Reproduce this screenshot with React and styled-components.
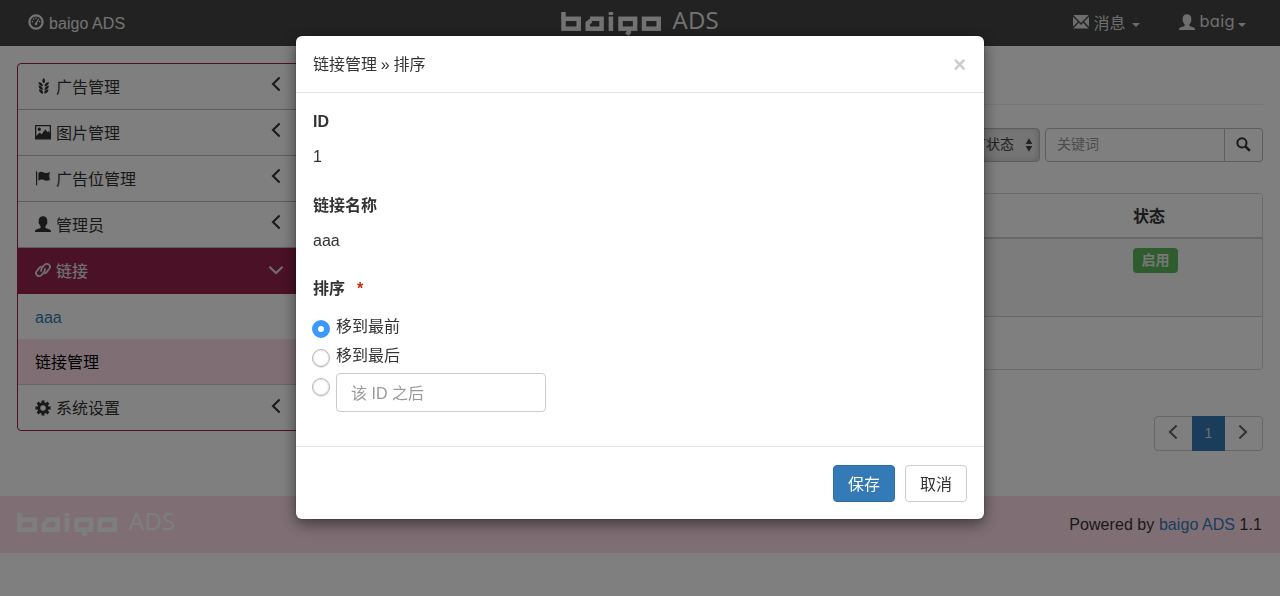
import React from "react";
import styled, { createGlobalStyle, css } from "styled-components";

const Global = createGlobalStyle`
  * { box-sizing: border-box; }
  html, body { margin: 0; height: 596px; overflow: hidden; }
  body {
    background: #fff;
    color: #333;
    font: 16px/23px "Liberation Sans", "Noto Sans CJK SC", sans-serif;
  }
  input, button { font: inherit; color: inherit; margin: 0; }
  svg { display: block; flex: none; }
`;

/* ---------- icons ---------- */
const Icon = ({ size = 16, children }) => (
  <svg width={size} height={size} viewBox="0 0 16 16" fill="currentColor" aria-hidden="true">
    {children}
  </svg>
);
const line = { fill: "none", stroke: "currentColor" };

const DashboardIcon = () => (
  <Icon>
    <circle cx="8" cy="8" r="6.6" {...line} strokeWidth="2.2" />
    <circle cx="4.4" cy="7.6" r=".8" />
    <circle cx="5.7" cy="5.1" r=".8" />
    <circle cx="8" cy="4.1" r=".8" />
    <circle cx="11.6" cy="7.6" r=".8" />
    <path d="M10.2 4.4l1 .5-2.1 4.2a1.3 1.3 0 1 1-1.2-.5z" />
  </Icon>
);
const GrainIcon = () => (
  <Icon>
    <path d="M8.700 0c1.700 1.500 2.100 3.300 0 5.500-2.100-2.200-1.700-4 0-5.500zM3.500 3.900c2.700.3 4.300 1.700 4.500 4.300C5.100 8 3.600 6.600 3.500 3.900zM13.900 3.900c-2.700.3-4.300 1.700-4.500 4.300 2.900-.2 4.400-1.600 4.500-4.300zM3.500 7.600c2.700.3 4.300 1.700 4.500 4.300-2.900-.2-4.400-1.600-4.500-4.300zM13.900 7.600c-2.700.3-4.300 1.700-4.500 4.300 2.900-.2 4.400-1.600 4.500-4.300zM3.900 11.300c2 .3 3.400 1.100 4.100 2.300V15.800C5.500 15.200 4 13.700 3.900 11.300zM13.500 11.300c-2 .3-3.400 1.100-4.100 2.300V15.800c2.500-.6 4-2.100 4.100-4.500z" />
  </Icon>
);
const PictureIcon = () => (
  <Icon>
    <path fillRule="evenodd" d="M0 1h16v14.500H0zM1.300 2.300v9.700l3.300-3.600 2.100 1.900 3.600-5 2 2.700 1.200-.9 1.200 2V2.300zM4.300 3.500a1.700 1.700 0 1 1 0 3.400 1.700 1.700 0 0 1 0-3.400z" />
  </Icon>
);
const FlagIcon = () => (
  <Icon>
    <path d="M1 1.200h1.200V15.200H1zM3.400 3.100c1.800-1.600 3.600-1.500 5.300-.7 1.800.9 3.600.9 6.300-.3l-.8 3.600.7 4.200c-2.600 1.200-4.400.9-6.200 0-1.800-.8-3.400-.6-5.300.8z" />
  </Icon>
);
const UserIcon = () => (
  <Icon>
    <path d="M8 .2c2.800 0 4.300 1.800 4.300 4.400 0 .6-.1 1-.2 1.400.6.1.5 1.700-.4 2.100-.3 1.200-.8 2-1.500 2.600 0 1 .4 1.300 1.600 1.800 2.200.8 4.100 1.300 4.200 2.400V16H0v-1.100c.1-1.100 2-1.600 4.200-2.400 1.200-.5 1.600-.8 1.600-1.800-.7-.6-1.200-1.400-1.500-2.600-.9-.4-1-2-.4-2.100-.1-.4-.2-.8-.2-1.400C3.700 2 5.200.2 8 .2z" />
  </Icon>
);
const linkLoop = "M7.700 10.200C6.500 9.500 6 8.600 6 7.400V3.200a3.100 3.100 0 0 1 6.200 0V7.400c0 1.400-.8 2.400-2 2.900";
const LinkIcon = () => (
  <Icon>
    <g {...line} strokeWidth="1.800" transform="rotate(38 8 8)">
      <path d={linkLoop} />
      <path d={linkLoop} transform="rotate(180 8 8)" />
    </g>
  </Icon>
);
const CogIcon = () => (
  <Icon>
    <circle cx="8" cy="8" r="4.200" {...line} strokeWidth="2.900" />
    <g {...line} strokeWidth="3">
      <path d="M8 .4V3M8 13v2.600M.4 8H3M13 8h2.600M2.600 2.600l2 2M11.400 11.400l2 2M2.600 13.400l2-2M11.400 4.600l2-2" />
    </g>
  </Icon>
);
const EnvelopeIcon = () => (
  <Icon>
    <path d="M.3 1.100h15.400L8 9zM0 2.700l4.900 5L0 12.800zM16 2.700v10.100l-4.900-5.100zM.3 14.600l5.600-5.900L8 10.900l2.100-2.200 5.600 5.900z" />
  </Icon>
);
const SearchIcon = () => (
  <Icon size={15}>
    <circle cx="6.300" cy="6.300" r="4.900" {...line} strokeWidth="2.100" />
    <path d="M10 10l4.800 4.700" {...line} strokeWidth="2.700" />
  </Icon>
);
const Chevron = ({ dir, size = 16 }) => (
  <Icon size={size}>
    <path
      d={{ left: "M11.600 1.600L5 8l6.600 6.400", right: "M4.400 1.600L11 8l-6.600 6.400", down: "M1.400 4.700L8 11l6.600-6.300" }[dir]}
      {...line}
      strokeWidth="2.100"
    />
  </Icon>
);
const SelectArrows = () => (
  <svg width="8" height="14" viewBox="0 0 8 14" fill="currentColor">
    <path d="M4 .3L7.300 6H.7zM4 13.700L7.300 8H.7z" />
  </svg>
);

/* ---------- brand ---------- */
const BrandBox = styled.div`
  display: flex;
  width: 160px;
  height: 24px;
  color: ${(p) => p.$color};
`;
const BrandName = styled.span`
  margin: -2px 0 0 11px;
  font: 400 24px/20px "Open Sans", "Noto Sans", sans-serif;
  letter-spacing: 0.2px;
`;
const Brand = ({ color }) => (
  <BrandBox $color={color}>
    <svg width="101" height="24" viewBox="0 0 101 24" fill="none" stroke="currentColor" strokeWidth="4.500" role="img" aria-label="baigo">
      <rect x="2.500" y="6.800" width="15.200" height="9.900" />
      <path d="M29 6.800H40.600V16.700H26.700V11.200L30 8.500" />
      <rect x="59.500" y="6.800" width="14.600" height="9.900" />
      <rect x="83" y="6.800" width="14.700" height="9.900" />
      <path d="M2.500 0V7M49.900 0v3M49.900 4.600V19M67.800 17v3.200L66 22.700" />
    </svg>
    <BrandName>ADS</BrandName>
  </BrandBox>
);

/* ---------- page ---------- */
const Navbar = styled.header`
  display: flex;
  justify-content: space-between;
  height: 46px;
  padding: 0 34px 0 28px;
  background: #444;
  border-bottom: 1px solid #424242;
  color: #ddd;
`;
const NavLink = styled.a`
  display: flex;
  align-items: center;
  height: 46px;
  gap: 4px;
  svg { margin-top: -2px; }
  ${(p) => p.$bright && css`
    width: 207px;
    gap: 5px;
    letter-spacing: 0.06px;
    color: #e6e6e6;
  `}
`;
const NavBrand = styled.div`
  padding-top: 12px;
  margin-left: 124px;
`;
const NavRight = styled.nav`
  display: flex;
  justify-content: flex-end;
  gap: 39px;
  width: 324px;
`;
const Caret = styled.span`
  margin: 4px 0 0 ${(p) => p.$gap}px;
  border: 4px solid transparent;
  border-top-color: currentColor;
  border-bottom: 0;
`;
const UserName = styled.span`
  font-family: "Inter", sans-serif;
  font-size: 16.500px;
  font-feature-settings: "cv11", "ss03";
  letter-spacing: 0.3px;
  margin-top: -3px;
`;

const Columns = styled.div`
  display: flex;
  gap: 34px;
  height: 450px;
  padding: 17px 17px 0;
`;
const Sidebar = styled.aside`
  width: 286px;
  height: 368px;
  border: 1px solid #99224e;
  border-radius: 4px;
  overflow: hidden;
`;
const SideItem = styled.a`
  display: flex;
  align-items: center;
  justify-content: space-between;
  height: 46px;
  padding: 1px 19px 0 17px;
  border-bottom: 1px solid #bbb;
  ${(p) => p.$open && css`
    background: #96224d;
    border-color: #96224d;
    color: #ddd;
    font-weight: 500;
  `}
  ${(p) => p.$last && css`border-bottom: 0;`}
`;
const SideLabel = styled.span`
  display: flex;
  align-items: center;
  gap: 5px;
  svg { margin-top: -2px; }
`;
const Arrow = styled.span`
  padding-bottom: ${(p) => (p.$open ? 2 : 6)}px;
  margin-right: -1px;
`;
const SubItem = styled.a`
  display: flex;
  align-items: center;
  height: 45px;
  padding: 2px 17px 0;
  color: #337ab7;
  ${(p) => p.$active && css`
    height: 46px;
    background: #ffdfe8;
    border-bottom: 1px solid #ccc;
    color: #000;
  `}
`;

const Main = styled.main`
  flex: 1;
`;
const Heading = styled.div`
  height: 42px;
  border-bottom: 1px solid #eee;
`;
const Filters = styled.div`
  display: flex;
  justify-content: flex-end;
  height: 34px;
  margin: 23px 0 31px;
  font-size: 14px;
`;
const Select = styled.div`
  display: flex;
  align-items: center;
  gap: 11px;
  padding: 0 6px 2px 13px;
  margin-right: 5px;
  border: 1px solid #bbb;
  border-radius: 4px;
  background: #eaeaea;
  color: #444;
  box-shadow: inset -2px -1px 5px rgba(0, 0, 0, 0.13);
  svg { margin-top: 2px; }
`;
const Keyword = styled.input`
  width: 180px;
  padding: 0 11px 2px;
  border: 1px solid #bbb;
  border-radius: 4px 0 0 4px;
  background: #fff;
  &::placeholder { color: #999; opacity: 1; }
`;
const SearchButton = styled.button`
  display: flex;
  align-items: center;
  justify-content: center;
  width: 38px;
  padding: 0 0 2px;
  border: 1px solid #bbb;
  border-left: 0;
  border-radius: 0 4px 4px 0;
  background: #fff;
`;
const Panel = styled.section`
  height: 177px;
  border: 1px solid #d4d4d4;
  border-radius: 4px;
  overflow: hidden;
`;
const Row = styled.div`
  display: grid;
  grid-template-columns: 1fr 129px;
  height: ${(p) => p.$height}px;
  padding-top: ${(p) => p.$top || 0}px;
  border-bottom: ${(p) => p.$line || 0}px solid #cfcfcf;
  background: ${(p) => (p.$striped ? "#f9f9f9" : "#fff")};
  font-weight: ${(p) => (p.$head ? 700 : 400)};
`;
const Badge = styled.span`
  display: flex;
  align-items: center;
  justify-content: center;
  width: 45px;
  height: 25px;
  border-radius: 4px;
  background: #5cb85c;
  color: #eee;
  font-size: 14px;
  font-weight: 700;
`;
const Pager = styled.div`
  display: flex;
  width: 109px;
  height: 35px;
  margin: 46px 0 0 auto;
  border: 1px solid #ccc;
  border-radius: 4px;
  color: #666;
  font-size: 14px;
`;
const Page = styled.a`
  display: flex;
  flex: 1;
  align-items: center;
  justify-content: center;
  padding: 0 1px 3px 0;
  ${(p) => p.$active && css`
    flex: none;
    width: 33px;
    margin: -1px 0;
    padding: 1px 0 1px;
    background: #337ab7;
    color: #ddd;
  `}
`;
const Footer = styled.footer`
  display: flex;
  justify-content: space-between;
  height: 57px;
  padding: 17px 18px 0 17px;
  background: #ffdfe8;
`;
const Credit = styled.p`
  margin: 0;
  letter-spacing: 0.06px;
  a { color: #337ab7; }
`;

/* ---------- dialog ---------- */
const Backdrop = styled.div`
  position: fixed;
  inset: 0;
  background: rgba(0, 0, 0, 0.5);
`;
const Dialog = styled.div`
  width: 688px;
  height: 483px;
  margin: 36px auto 0;
  border-radius: 6px;
  background: #fff;
  box-shadow: 0 5px 15px rgba(0, 0, 0, 0.5), 0 0 0 1px rgba(0, 0, 0, 0.1);
`;
const DialogHeader = styled.div`
  display: flex;
  align-items: center;
  justify-content: space-between;
  height: 57px;
  padding: 0 18px 0 17px;
  border-bottom: 1px solid #e5e5e5;
`;
const DialogTitle = styled.span`
  word-spacing: -0.6px;
`;
const Close = styled.button`
  padding: 1px 0 0;
  border: 0;
  background: none;
  color: #ccc;
  font-size: 22px;
  font-weight: 700;
`;
const DialogBody = styled.div`
  height: 353px;
  padding: 17px 17px 0;
`;
const Field = styled.div`
  margin-bottom: 25px;
  & + & { margin-bottom: 24px; }
`;
const FieldLabel = styled.div`
  display: flex;
  gap: 12px;
  height: 24px;
  line-height: 24px;
  margin-bottom: 11px;
  font-weight: 700;
`;
const FieldValue = styled.div`
  height: 24px;
  line-height: 24px;
`;
const Required = styled.span`
  color: #d9230f;
`;
const Option = styled.label`
  display: flex;
  gap: 6px;
  height: 29px;
  margin-left: -1px;
  line-height: 29px;
`;
const Radio = styled.span`
  width: 18px;
  height: 18px;
  margin-top: 8px;
  border-radius: 50%;
  border: 1px solid #b8b8b8;
  box-shadow: inset 0 0 2px rgba(0, 0, 0, 0.25), 0 1px 1px rgba(0, 0, 0, 0.1);
  ${(p) => p.$checked && css`
    border: 6px solid #3b99fc;
    box-shadow: none;
  `}
`;
const OrderInput = styled.input`
  width: 210px;
  height: 39px;
  margin-top: 3px;
  padding: 2px 14px 0;
  border: 1px solid #ccc;
  border-radius: 4px;
  background: #fff;
  &::placeholder { color: #999; opacity: 1; }
`;
const DialogFooter = styled.div`
  display: flex;
  justify-content: flex-end;
  gap: 10px;
  height: 73px;
  padding: 18px 17px 0;
  border-top: 1px solid #e5e5e5;
`;
const Button = styled.button`
  width: 62px;
  height: 37px;
  padding: 2px 0 0;
  border: 1px solid ${(p) => (p.$primary ? "#2e6da4" : "#ccc")};
  border-radius: 4px;
  background: ${(p) => (p.$primary ? "#337ab7" : "#fff")};
  color: ${(p) => (p.$primary ? "#fff" : "#333")};
`;

const topItems = [
  ["广告管理", GrainIcon],
  ["图片管理", PictureIcon],
  ["广告位管理", FlagIcon],
  ["管理员", UserIcon],
];

const MenuItem = ({ label, icon: Glyph, open, last }) => (
  <SideItem $open={open} $last={last}>
    <SideLabel><Glyph />{label}</SideLabel>
    <Arrow $open={open}><Chevron dir={open ? "down" : "left"} /></Arrow>
  </SideItem>
);

export default function App() {
  return (
    <>
      <Global />
      <Navbar>
        <NavLink $bright><DashboardIcon />baigo ADS</NavLink>
        <NavBrand><Brand color="#e6e6e6" /></NavBrand>
        <NavRight>
          <NavLink><EnvelopeIcon />消息<Caret $gap={3} /></NavLink>
          <NavLink><UserIcon /><UserName>baig</UserName><Caret $gap={-1} /></NavLink>
        </NavRight>
      </Navbar>
      <Columns>
        <Sidebar>
          {topItems.map(([label, icon]) => <MenuItem key={label} label={label} icon={icon} />)}
          <MenuItem label="链接" icon={LinkIcon} open />
          <SubItem>aaa</SubItem>
          <SubItem $active>链接管理</SubItem>
          <MenuItem label="系统设置" icon={CogIcon} last />
        </Sidebar>
        <Main>
          <Heading />
          <Filters>
            <Select>所有状态<SelectArrows /></Select>
            <Keyword placeholder="关键词" />
            <SearchButton><SearchIcon /></SearchButton>
          </Filters>
          <Panel>
            <Row $height={45} $top={11} $line={2} $head><span /><span>状态</span></Row>
            <Row $height={78} $top={9} $line={1} $striped><span /><span><Badge>启用</Badge></span></Row>
            <Row $height={52} />
          </Panel>
          <Pager>
            <Page><Chevron dir="left" /></Page>
            <Page $active>1</Page>
            <Page><Chevron dir="right" /></Page>
          </Pager>
        </Main>
      </Columns>
      <Footer>
        <Brand color="#fbfffc" />
        <Credit>Powered by <a>baigo ADS</a> 1.1</Credit>
      </Footer>
      <Backdrop>
        <Dialog role="dialog">
          <DialogHeader>
            <DialogTitle>链接管理 » 排序</DialogTitle>
            <Close>×</Close>
          </DialogHeader>
          <DialogBody>
            <Field>
              <FieldLabel>ID</FieldLabel>
              <FieldValue>1</FieldValue>
            </Field>
            <Field>
              <FieldLabel>链接名称</FieldLabel>
              <FieldValue>aaa</FieldValue>
            </Field>
            <FieldLabel>排序<Required>*</Required></FieldLabel>
            <Option><Radio $checked />移到最前</Option>
            <Option><Radio />移到最后</Option>
            <Option><Radio /><OrderInput placeholder="该 ID 之后" /></Option>
          </DialogBody>
          <DialogFooter>
            <Button $primary>保存</Button>
            <Button>取消</Button>
          </DialogFooter>
        </Dialog>
      </Backdrop>
    </>
  );
}
